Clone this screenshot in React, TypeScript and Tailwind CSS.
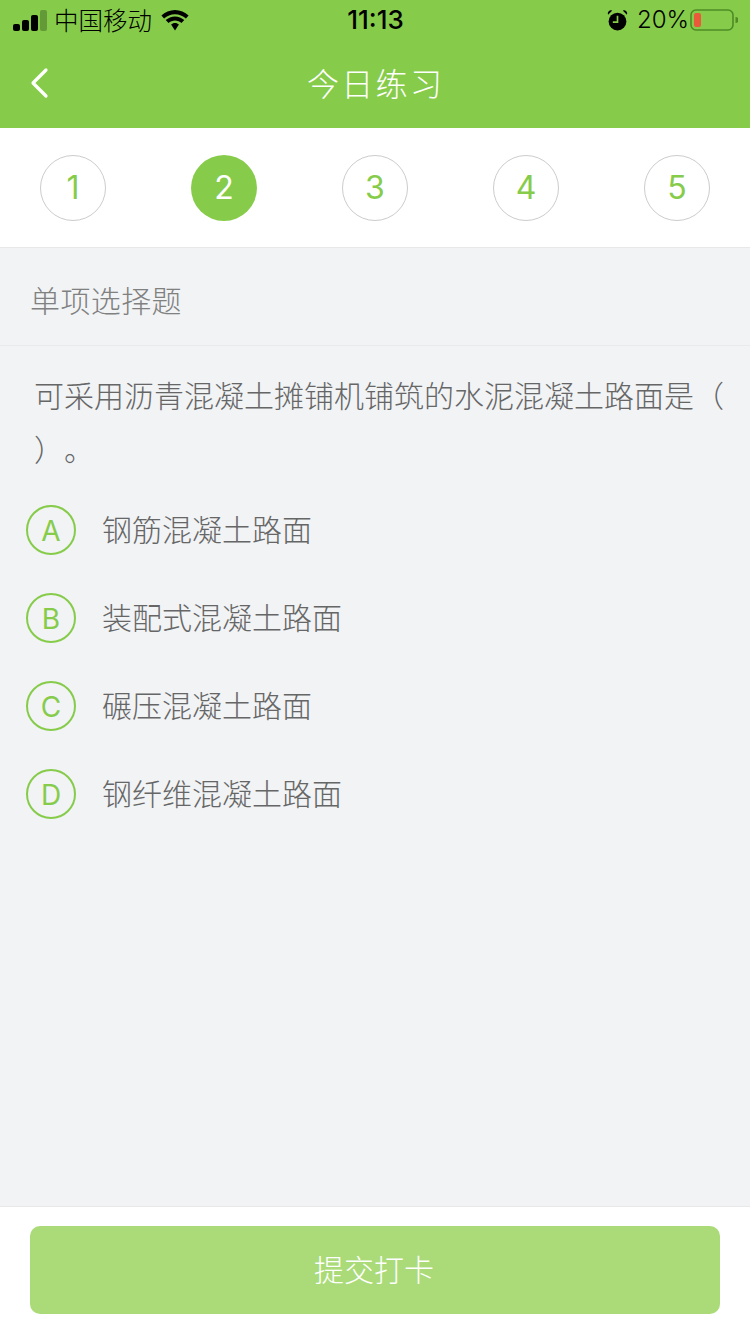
const steps = ['1', '2', '3', '4', '5'];
const activeStep = '2';

const options = [
  { key: 'A', text: '钢筋混凝土路面' },
  { key: 'B', text: '装配式混凝土路面' },
  { key: 'C', text: '碾压混凝土路面' },
  { key: 'D', text: '钢纤维混凝土路面' },
];

function SignalIcon() {
  return (
    <svg width="34" height="21" viewBox="0 0 34 21">
      <rect x="0" y="14" width="7" height="7" rx="2" fill="#000" />
      <rect x="9" y="10" width="7" height="11" rx="2" fill="#000" />
      <rect x="18" y="5" width="7" height="16" rx="2" fill="#000" />
      <rect x="27" y="0" width="7" height="21" rx="2" fill="#000" fillOpacity="0.25" />
    </svg>
  );
}

function WifiIcon() {
  return (
    <svg width="30" height="21" viewBox="0 0 30 21">
      <path d="M15 4.2c4.2 0 8 1.6 10.9 4.3l2.7-2.9C25 2.2 20.2 0 15 0S5 2.2 1.4 5.6l2.7 2.9C7 5.8 10.8 4.2 15 4.2z" fill="#000" />
      <path d="M15 10.6c2.5 0 4.8 1 6.5 2.5l2.8-3C21.8 7.8 18.5 6.4 15 6.4s-6.8 1.4-9.3 3.7l2.8 3c1.7-1.5 4-2.5 6.5-2.5z" fill="#000" />
      <path d="M15 13c-1.5 0-2.9.6-3.9 1.5L15 20.5l3.9-6C17.9 13.6 16.5 13 15 13z" fill="#000" />
    </svg>
  );
}

function AlarmIcon() {
  return (
    <svg width="21" height="23" viewBox="0 0 20 22">
      <circle cx="10" cy="12" r="8.5" fill="#000" />
      <path d="M1 5.5 L5 1.5 A3 3 0 0 0 1 5.5z" fill="#000" />
      <path d="M19 5.5 L15 1.5 A3 3 0 0 1 19 5.5z" fill="#000" />
      <path d="M10 6.5 V12.5 H5.5" stroke="#86cc4a" strokeWidth="1.6" fill="none" />
    </svg>
  );
}

function BatteryIcon() {
  return (
    <svg width="48" height="24" viewBox="0 0 48 24">
      <rect x="1" y="2" width="42" height="20" rx="5" fill="none" stroke="#4f8a25" strokeWidth="1.6" />
      <rect x="4" y="5" width="7" height="14" rx="2" fill="#ea5a3a" />
      <path d="M45.5 9 a3 3 0 0 1 0 6z" fill="#4f8a25" />
    </svg>
  );
}

function BackIcon() {
  return (
    <svg width="20" height="32" viewBox="0 0 20 32" fill="none">
      <path d="M17 3 L4 16 L17 29" stroke="#fff" strokeWidth="3.2" strokeLinecap="round" strokeLinejoin="round" />
    </svg>
  );
}

export default function App() {
  return (
    <div className="flex h-[1334px] w-[750px] flex-col overflow-hidden bg-[#f1f3f5] font-['Noto_Sans_CJK_SC',sans-serif]">
      <header className="h-[128px] shrink-0 bg-[#86cc4a]">
        <div className="flex h-10 items-center justify-between pl-[13px] pr-[12px] text-black">
          <div className="flex w-[300px] items-center">
            <SignalIcon />
            <span className="ml-[7px] text-[24.5px] font-light leading-none">中国移动</span>
            <span className="ml-[8px]"><WifiIcon /></span>
          </div>
          <span className="font-['Inter',sans-serif] text-[26px] font-medium leading-none">11:13</span>
          <div className="flex w-[300px] items-center justify-end">
            <AlarmIcon />
            <span className="ml-[9px] font-['Inter',sans-serif] text-[24px] font-light leading-none">20%</span>
            <span className="ml-[1px]"><BatteryIcon /></span>
          </div>
        </div>
        <div className="flex h-[88px] items-center pl-[29px]">
          <div className="flex w-[40px] shrink-0 -translate-y-[1px]"><BackIcon /></div>
          <h1 className="ml-[238px] -translate-y-[2px] text-[32px] font-light leading-none tracking-[2.3px] text-white">今日练习</h1>
        </div>
      </header>

      <nav className="flex h-[120px] shrink-0 items-center justify-between border-b border-[#e8e8e8] bg-white px-10">
        {steps.map((step) => (
          <div
            key={step}
            className={
              step === activeStep
                ? "flex h-[66px] w-[66px] items-center justify-center rounded-full bg-[#86cc4a] font-['Inter',sans-serif] text-[32px] text-white"
                : "flex h-[66px] w-[66px] items-center justify-center rounded-full border border-[#cccccc] font-['Inter',sans-serif] text-[32px] text-[#86cc4a]"
            }
          >
            {step}
          </div>
        ))}
      </nav>

      <div className="flex h-[98px] shrink-0 items-center border-b border-[#e8eaec] pl-[30px] pt-[4px] text-[30px] font-light leading-none tracking-[0.4px] text-[#808080]">
        单项选择题
      </div>

      <main className="flex-1">
        <p className="pl-[34px] pr-[20px] pt-[21px] text-[30px] font-light leading-[54px] text-[#666666] [text-spacing-trim:space-all]">
          可采用沥青混凝土摊铺机铺筑的水泥混凝土路面是（ ）。
        </p>
        <ul className="mt-[11px] flex flex-col pl-[26px]">
          {options.map((option) => (
            <li key={option.key} className="flex h-[88px] items-center">
              <span className="flex h-[50px] w-[50px] shrink-0 items-center justify-center rounded-full border-2 border-[#86cc4a] pt-[2px] font-['Inter',sans-serif] text-[28px] text-[#86cc4a]">
                {option.key}
              </span>
              <span className="mb-[4px] ml-[26px] text-[30px] font-light leading-none text-[#666666]">{option.text}</span>
            </li>
          ))}
        </ul>
      </main>

      <footer className="h-[128px] shrink-0 border-t border-[#e8e8e8] bg-white px-[30px] pt-[19px]">
        <button className="flex h-[88px] w-full items-center justify-center rounded-[10px] bg-[#aadb78] pb-[4px] pr-[2px] text-[30px] font-light text-white">
          提交打卡
        </button>
      </footer>
    </div>
  );
}
